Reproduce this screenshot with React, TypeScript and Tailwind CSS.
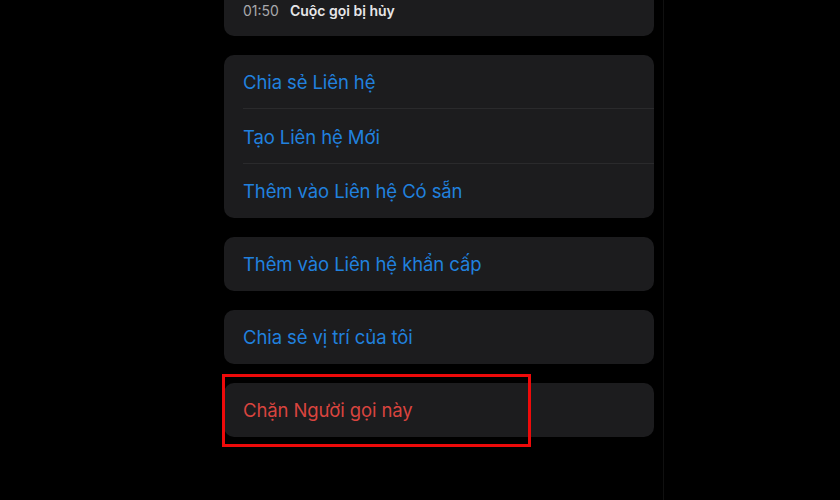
import React from "react";

const font = { fontFamily: "Inter, 'Noto Sans', sans-serif" };

function Row({ label, color, sep, h = "h-[54px]" }: { label: string; color: string; sep?: boolean; h?: string }) {
  return (
    <div className={`relative flex items-center pl-[19px] pt-[2px] ${h}`}>
      <span className={`text-[18.5px] tracking-[-0.1px] ${color}`}>{label}</span>
      {sep && <div className="absolute bottom-0 left-[19px] right-0 h-px bg-[#2a2a2c]" />}
    </div>
  );
}

export default function App() {
  return (
    <div className="h-[500px] w-[840px] overflow-hidden bg-black" style={font}>
      <div className="h-full w-[664px] border-r border-[#101010]">
        <div className="ml-[224px] flex w-[430px] flex-col gap-[19px]">
          <div className="-mt-[20px] flex h-[56px] items-end gap-[11px] rounded-[10px] bg-[#1c1c1e] pb-[15px] pl-[19px]">
            <span className="text-[14px] text-[#a8a8ac]">01:50</span>
            <span className="text-[14px] font-semibold text-[#e6e6e8]">Cuộc gọi bị hủy</span>
          </div>
          <div className="flex flex-col rounded-[10px] bg-[#1c1c1e]">
            <Row label="Chia sẻ Liên hệ" color="text-[#2181de]" sep />
            <Row label="Tạo Liên hệ Mới" color="text-[#2181de]" sep h="h-[55px]" />
            <Row label="Thêm vào Liên hệ Có sẵn" color="text-[#2181de]" />
          </div>
          <div className="rounded-[10px] bg-[#1c1c1e]">
            <Row label="Thêm vào Liên hệ khẩn cấp" color="text-[#2181de]" />
          </div>
          <div className="rounded-[10px] bg-[#1c1c1e]">
            <Row label="Chia sẻ vị trí của tôi" color="text-[#2181de]" />
          </div>
          <div className="relative rounded-[10px] bg-[#1c1c1e]">
            <Row label="Chặn Người gọi này" color="text-[#d9443f]" />
            <div className="absolute left-[-2px] top-[-9px] h-[73px] w-[309px] border-[3px] border-[#ee0a0a]" />
          </div>
        </div>
      </div>
    </div>
  );
}
